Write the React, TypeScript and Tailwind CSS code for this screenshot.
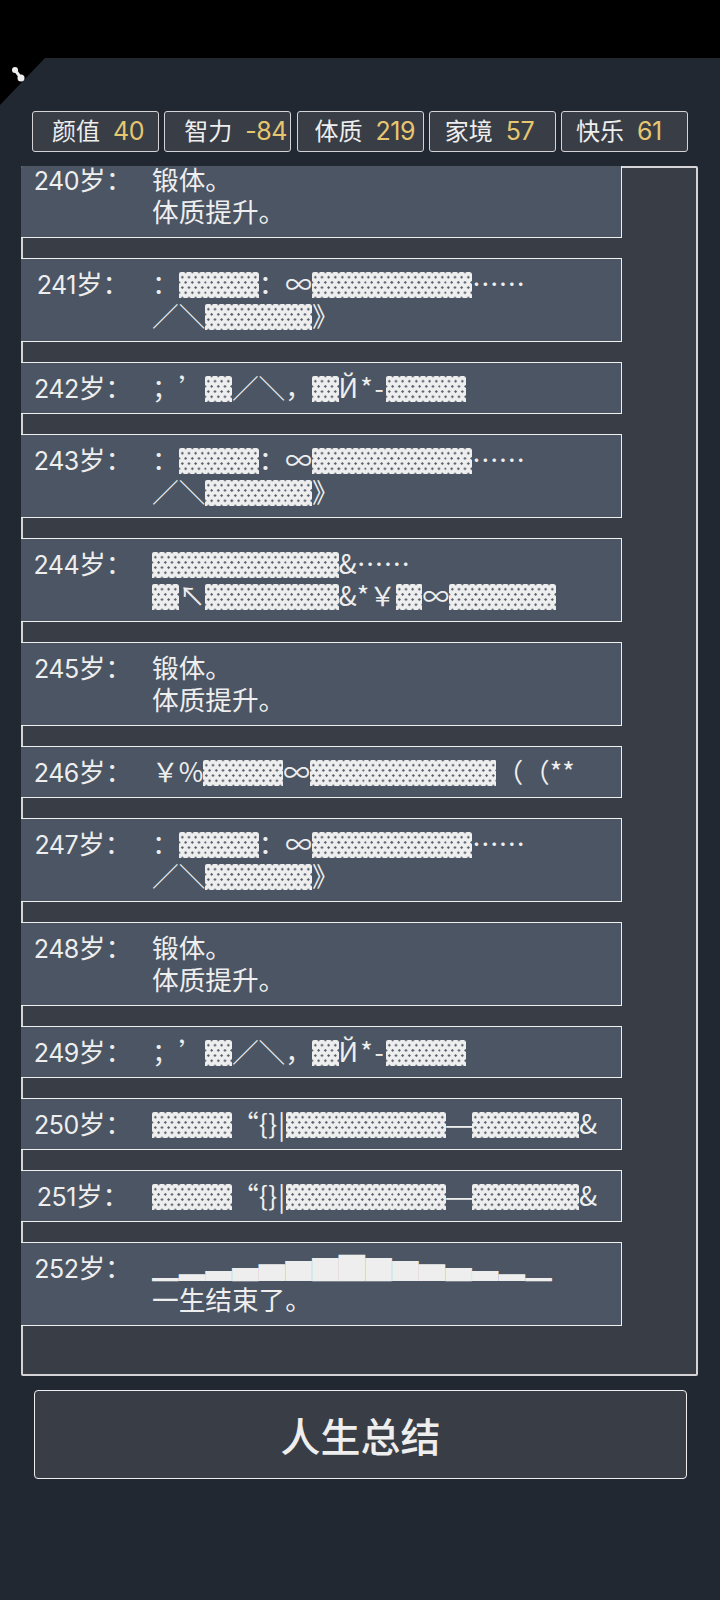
import React from 'react';

const stats = [
  { label: '颜值', value: '40', pad: 'pl-[19px]' },
  { label: '智力', value: '-84', pad: 'pl-[19px]' },
  { label: '体质', value: '219', pad: 'pl-[17px]' },
  { label: '家境', value: '57', pad: 'pl-[15px]' },
  { label: '快乐', value: '61', pad: 'pl-[14px]' },
];

const rows = [
  { age: 240, lines: ['锻体。', '体质提升。'] },
  { age: 241, lines: ['：▒▒▒：∞▒▒▒▒▒▒……', '／＼▒▒▒▒》'] },
  { age: 242, lines: ['；’▒／＼，▒Й*-▒▒▒'] },
  { age: 243, lines: ['：▒▒▒：∞▒▒▒▒▒▒……', '／＼▒▒▒▒》'] },
  { age: 244, lines: ['▒▒▒▒▒▒▒&……', '▒↖▒▒▒▒▒&*￥▒∞▒▒▒▒'] },
  { age: 245, lines: ['锻体。', '体质提升。'] },
  { age: 246, lines: ['￥%▒▒▒∞▒▒▒▒▒▒▒（（**'] },
  { age: 247, lines: ['：▒▒▒：∞▒▒▒▒▒▒……', '／＼▒▒▒▒》'] },
  { age: 248, lines: ['锻体。', '体质提升。'] },
  { age: 249, lines: ['；’▒／＼，▒Й*-▒▒▒'] },
  { age: 250, lines: ['▒▒▒“{}|▒▒▒▒▒▒—▒▒▒▒&'] },
  { age: 251, lines: ['▒▒▒“{}|▒▒▒▒▒▒—▒▒▒▒&'] },
  { age: 252, lines: ['▁▂▃▄▅▆▇█▇▆▅▄▃▂▁', '一生结束了。'] },
];

// the shade glyph shows as a dotted cell in the game, so the cell carries the dots
const Line: React.FC<{ text: string }> = ({ text }) => (
  <div className="h-[32px]">
    {text.split(/(▒|—|\{\}\||Й\*-)/).map((part, i) => {
      if (part === '▒') {
        return (
          <span
            key={i}
            className="inline-block align-top w-[26.67px] h-[26px] mt-[4.5px] text-transparent leading-[26px] bg-[#eeeeee] bg-[radial-gradient(circle,#4f5864_0.9px,transparent_1.4px),radial-gradient(circle,#4f5864_0.9px,transparent_1.4px)] bg-[size:6.67px_10.4px] bg-[position:0_0,3.33px_5.2px]"
          >
            ▒
          </span>
        );
      }
      if (part === '—') {
        return (
          <span key={i} className="inline-block w-[26.67px] text-center scale-x-125">
            —
          </span>
        );
      }
      if (part === '{}|') {
        return (
          <span key={i} className="tracking-[0.67px]">
            {part}
          </span>
        );
      }
      if (part === 'Й*-') {
        return (
          <span key={i} className="tracking-[2px]">
            {part}
          </span>
        );
      }
      return <span key={i}>{part}</span>;
    })}
  </div>
);

const App: React.FC = () => {
  return (
    <div className="relative w-[720px] h-[1600px] overflow-hidden bg-[#222831] text-[#eeeeee] font-['Noto_Sans_CJK_SC',sans-serif] [text-spacing-trim:space-all]">
      {/* Status bar */}
      <div className="h-[58px] bg-black" />

      {/* Corner badge */}
      <svg className="absolute left-0 top-[58px]" width="46" height="48" viewBox="0 0 46 48">
        <polygon points="0,0 45,0 0,47" fill="#000" />
        <circle cx="15" cy="12" r="3" fill="#eee" />
        <circle cx="21" cy="20" r="3.5" fill="#eee" />
        <path d="M15 12 L21 20" stroke="#eee" strokeWidth="3" />
      </svg>

      {/* Properties */}
      <div className="mt-[53px] ml-[32px] flex gap-[5.25px]">
        {stats.map((s) => (
          <div
            key={s.label}
            className={`flex items-center gap-[13px] w-[127px] h-[41px] rounded-[3px] border border-[#d4d4d8] bg-[#393e46] ${s.pad}`}
          >
            <span className="text-[24px] leading-none -mt-[3px] shrink-0">{s.label}</span>
            <span className="font-['Inter'] text-[25px] leading-none tracking-[-0.5px] text-[#e6c770] shrink-0">{s.value}</span>
          </div>
        ))}
      </div>

      {/* Trajectory */}
      <div className="mt-[14px] ml-[21px] w-[677px] h-[1210px] overflow-hidden rounded-[2px] bg-[#393e46] shadow-[inset_0_0_0_2px_#d4d4d8]">
        <div className="flex flex-col gap-[20px] -mt-[12px]">
          {rows.map((r) => (
            <div
              key={r.age}
              className="flex w-[601px] pt-[8px] pb-[10px] bg-[#4b5563] border-y border-r border-[#eeeeee] text-[26.67px] leading-[32px]"
            >
              <div className="w-[124px] h-[32px] shrink-0 text-center">
                <span className="font-['Inter'] text-[25px] leading-none tracking-[-0.5px]">{r.age}</span>岁：
              </div>
              <div className="pl-[7px] whitespace-pre">
                {r.lines.map((line, i) => (
                  <Line key={i} text={line} />
                ))}
              </div>
            </div>
          ))}
        </div>
      </div>

      {/* Summary */}
      <button className="block mt-[14px] ml-[34px] w-[653px] h-[89px] rounded-[4px] border border-[#eeeeee] bg-[#393e46] text-[40px] font-medium text-[#eeeeee]">
        人生总结
      </button>
    </div>
  );
};

export default App;
